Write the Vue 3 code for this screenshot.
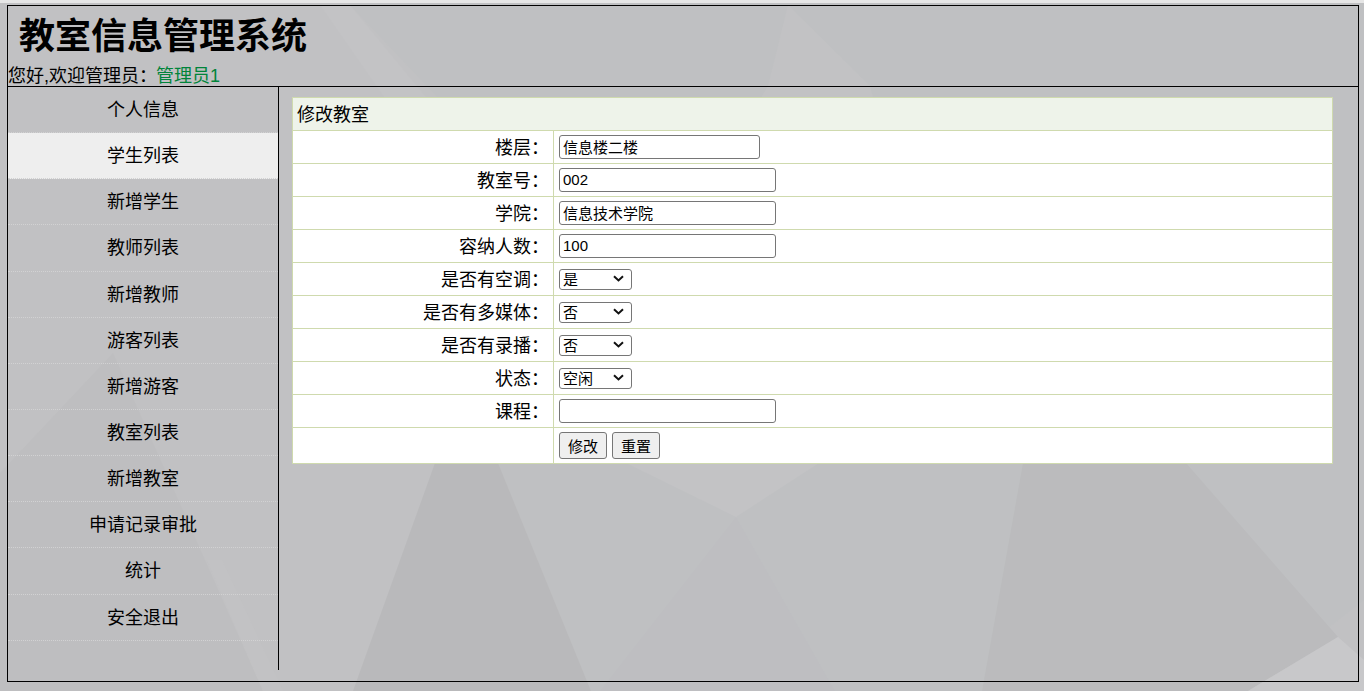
<script setup>
import { ref } from 'vue'

const menu = ['个人信息', '学生列表', '新增学生', '教师列表', '新增教师', '游客列表', '新增游客', '教室列表', '新增教室', '申请记录审批', '统计', '安全退出']
const active = ref('学生列表')

const textRows = [
  { label: '楼层：', value: '信息楼二楼', short: true },
  { label: '教室号：', value: '002' },
  { label: '学院：', value: '信息技术学院' },
  { label: '容纳人数：', value: '100' },
]
const selectRows = [
  { label: '是否有空调：', value: '是', options: ['是', '否'] },
  { label: '是否有多媒体：', value: '否', options: ['是', '否'] },
  { label: '是否有录播：', value: '否', options: ['是', '否'] },
  { label: '状态：', value: '空闲', options: ['空闲', '占用'] },
]
const polygons = [
  { points: '0,0 1364,0 1364,691 0,691', fill: '#c1c1c3' },
  { points: '345,0 1364,0 1364,600 1248,691 591,691 498,463 440,100', fill: '#bfc0c2' },
  { points: '320,5 350,5 445,120 400,120', fill: '#c3c3c5' },
  { points: '788,5 870,86 900,200 700,200 768,86', fill: '#c2c2c4' },
  { points: '435,463 498,463 591,691 353,691', fill: '#b9b9bb' },
  { points: '626,463 819,463 736,517', fill: '#c3c3c5' },
  { points: '736,517 835,691 600,691', fill: '#bebec1' },
  { points: '1023,463 1186,463 1338,637 1248,691 982,691', fill: '#bbbbbd' },
  { points: '1338,637 1364,660 1364,691 1248,691', fill: '#c8c8ca' },
  { points: '113,353 205,560 263,691 0,691 0,473', fill: '#bebec0' },
  { points: '207,560 222,560 283,691 263,691', fill: '#c2c2c4' },
]
</script>

<template>
  <div class="page">
    <svg class="backdrop" viewBox="0 0 1364 691" width="1364" height="691" aria-hidden="true">
      <polygon v-for="(p, i) in polygons" :key="i" :points="p.points" :fill="p.fill" />
    </svg>
    <div class="frame">
      <header class="head">
        <h1 class="title">教室信息管理系统</h1>
        <div class="welcome">您好,欢迎管理员：<span class="who">管理员1</span></div>
      </header>
      <div class="body">
        <nav class="side">
          <a
            v-for="m in menu"
            :key="m"
            class="item"
            :class="{ on: m === active }"
          >{{ m }}</a>
        </nav>
        <main class="main">
          <table class="form">
            <colgroup>
              <col class="col-lab" />
              <col />
            </colgroup>
            <tbody>
              <tr class="cap"><td colspan="2">修改教室</td></tr>
              <tr v-for="r in textRows" :key="r.label">
                <td class="lab">{{ r.label }}</td>
                <td class="val"><input class="inp" :class="{ short: r.short }" type="text" :value="r.value" /></td>
              </tr>
              <tr v-for="r in selectRows" :key="r.label">
                <td class="lab">{{ r.label }}</td>
                <td class="val">
                  <span class="sel-wrap">
                    <select class="sel" :value="r.value">
                      <option v-for="o in r.options" :key="o" :value="o">{{ o }}</option>
                    </select>
                    <svg class="chev" width="11" height="7" viewBox="0 0 11 7" aria-hidden="true">
                      <path d="M1 1.2 L5.5 5.4 L10 1.2" fill="none" stroke="#111" stroke-width="2" />
                    </svg>
                  </span>
                </td>
              </tr>
              <tr>
                <td class="lab">课程：</td>
                <td class="val"><input class="inp" type="text" value="" /></td>
              </tr>
              <tr class="acts">
                <td class="lab"></td>
                <td class="val">
                  <button class="btn" type="button">修改</button>
                  <button class="btn" type="reset">重置</button>
                </td>
              </tr>
            </tbody>
          </table>
        </main>
      </div>
    </div>
  </div>
</template>

<style>
html, body { margin: 0; padding: 0; background: #c1c1c3; }
</style>

<style scoped>
.page {
  position: relative;
  width: 1364px;
  height: 691px;
  overflow: hidden;
  padding-top: 5px;
  box-sizing: border-box;
  font-family: "Liberation Sans", "Noto Sans CJK SC", sans-serif;
  font-size: 18px;
  color: #000;
}
.page::before {
  content: "";
  position: absolute;
  left: 0;
  right: 0;
  top: 0;
  height: 3px;
  background: #e6e6e6;
  z-index: 1;
}
.backdrop {
  position: absolute;
  left: 0;
  top: 0;
  display: block;
}
.frame {
  position: relative;
  box-sizing: border-box;
  width: 1352px;
  height: 677px;
  margin-left: 7px;
  border: 1px solid #000;
}
.head {
  box-sizing: border-box;
  height: 81px;
  border-bottom: 1px solid #000;
  position: relative;
}
.title {
  margin: 0;
  padding: 7px 0 0 11px;
  font-size: 36px;
  line-height: 48px;
  font-weight: 700;
}
.welcome {
  line-height: 24px;
  margin-top: 3px;
  white-space: nowrap;
}
.who { color: #00843a; margin-left: -1px; }
.body { display: flex; align-items: flex-start; }
.side {
  box-sizing: border-box;
  width: 271px;
  height: 583px;
  border-right: 1px solid #000;
  flex: none;
}
.item {
  display: block;
  box-sizing: border-box;
  height: 46.15px;
  line-height: 47px;
  text-align: center;
  border-bottom: 1px dotted #d2d2d3;
}
.item.on { background: #eeeeee; }
.main { flex: 1; padding: 10px 0 0 13px; }
.form {
  border-collapse: collapse;
  width: 1041px;
  table-layout: fixed;
  background: #fff;
}
.col-lab { width: 261px; }
.form td {
  border: 1px solid #cfdaae;
  padding: 0;
  height: 33px;
  box-sizing: border-box;
}
.cap td {
  background: #eef3ea;
  padding: 0 0 2px 4px;
}
.lab { text-align: right; padding: 0 4px 2px 0 !important; }
.val { padding-left: 5px !important; }
.inp {
  box-sizing: border-box;
  display: block;
  width: 217px;
  height: 24px;
  padding: 0 3px 2px;
  border: 1px solid #767676;
  border-radius: 3px;
  font: inherit;
  font-size: 15px;
  background: #fff;
  color: #000;
}
.inp.short { width: 201px; }
.sel-wrap {
  position: relative;
  display: block;
  width: 73px;
  height: 21px;
}
.sel {
  box-sizing: border-box;
  display: block;
  width: 73px;
  height: 21px;
  padding: 0 0 0 3px;
  appearance: none;
  border: 1px solid #767676;
  border-radius: 3px;
  font: inherit;
  font-size: 15px;
  background: #fff;
  color: #000;
}
.chev {
  position: absolute;
  left: 54px;
  top: 6px;
  pointer-events: none;
}
.acts td { height: 36px; }
.btn {
  box-sizing: border-box;
  width: 48px;
  height: 27px;
  padding: 0;
  margin-right: 5px;
  border: 1px solid #767676;
  border-radius: 3px;
  background: #efefef;
  font: inherit;
  font-size: 15px;
  color: #000;
  vertical-align: middle;
}
</style>
